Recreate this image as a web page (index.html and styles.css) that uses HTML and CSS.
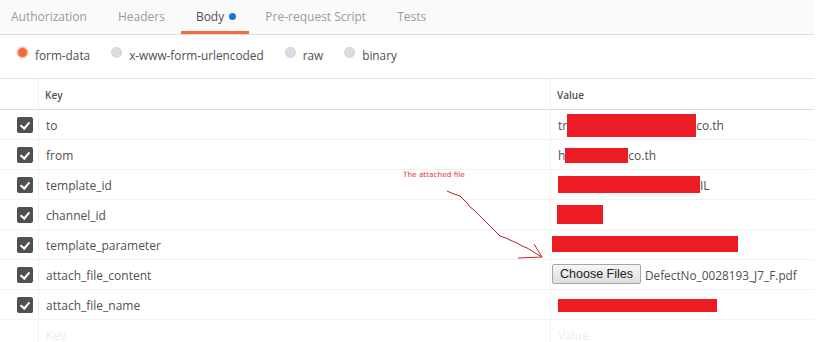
FILE: index.html
```html
<!DOCTYPE html>
<html>
<head>
<meta charset="utf-8">
<link rel="stylesheet" href="styles.css">
</head>
<body>
<div class="page">
  <div class="tabs">
    <div class="tab first">Authorization</div>
    <div class="tab">Headers</div>
    <div class="tab active">Body <span class="dot"></span></div>
    <div class="tab">Pre-request Script</div>
    <div class="tab">Tests</div>
  </div>
  <div class="modes">
    <label class="mode"><span class="radio on"></span>form-data</label>
    <label class="mode"><span class="radio"></span>x-www-form-urlencoded</label>
    <label class="mode"><span class="radio"></span>raw</label>
    <label class="mode"><span class="radio"></span>binary</label>
  </div>
  <div class="table">
    <div class="row head">
      <div class="cell chk"></div>
      <div class="cell key">Key</div>
      <div class="cell val">Value</div>
    </div>
    <div class="row">
      <div class="cell chk"><span class="box"></span></div>
      <div class="cell key">to</div>
      <div class="cell val">tr<span class="red r1"></span>co.th</div>
    </div>
    <div class="row">
      <div class="cell chk"><span class="box"></span></div>
      <div class="cell key">from</div>
      <div class="cell val">h<span class="red r2"></span>co.th</div>
    </div>
    <div class="row">
      <div class="cell chk"><span class="box"></span></div>
      <div class="cell key">template_id</div>
      <div class="cell val"><span class="red r3"></span>IL</div>
    </div>
    <div class="row">
      <div class="cell chk"><span class="box"></span></div>
      <div class="cell key">channel_id</div>
      <div class="cell val"><span class="red r4"></span></div>
    </div>
    <div class="row">
      <div class="cell chk"><span class="box"></span></div>
      <div class="cell key">template_parameter</div>
      <div class="cell val"><span class="red r5"></span></div>
    </div>
    <div class="row">
      <div class="cell chk"><span class="box"></span></div>
      <div class="cell key">attach_file_content</div>
      <div class="cell val file"><span class="choose">Choose Files</span><span class="fname">DefectNo_0028193_J7_F.pdf</span></div>
    </div>
    <div class="row">
      <div class="cell chk"><span class="box"></span></div>
      <div class="cell key">attach_file_name</div>
      <div class="cell val"><span class="red r6"></span></div>
    </div>
    <div class="row ph">
      <div class="cell chk"></div>
      <div class="cell key">Key</div>
      <div class="cell val">Value</div>
    </div>
    <div class="note">
      <span class="note-text">The attached file</span>
      <svg class="arrow" width="160" height="100" viewBox="0 0 160 100">
        <path d="M47 24 L54 27 L60 29 L63 32 L67 36 L70 40 L74 43 L77 46 L80 49 L84 53 L87 56 L92 61 L96 65 L100 69 L106 71 L112 74 L117 76 L122 79 L127 81 L132 84 L137 87 L142 90" fill="none" stroke="#b3262b" stroke-width="1"/>
        <path d="M118 91 L142 90 L134 77" fill="none" stroke="#c1272d" stroke-width="1"/>
      </svg>
    </div>
  </div>
</div>
</body>
</html>
```
FILE: styles.css
```css
* { box-sizing: border-box; }
body {
  margin: 0;
  background: #fff;
  font-family: "Open Sans", "Noto Sans", sans-serif;
  color: #505050;
}
.page { width: 814px; }
.tabs {
  display: flex;
  height: 35px;
  background: #fafafa;
  border-bottom: 1px solid #dcdcdc;
}
.tab {
  padding: 0 15px;
  height: 34px;
  line-height: 34px;
  font-size: 12px;
  color: #9a9a9a;
  margin-right: 1px;
}
.tab.first { margin-left: -4px; }
.tab.active {
  color: #505050;
  border-bottom: 3px solid #f26b3a;
  padding-right: 13px;
}
.dot {
  display: inline-block;
  width: 7px;
  height: 7px;
  border-radius: 50%;
  background: #1673e0;
  margin-left: 2px;
  vertical-align: 1px;
}
.modes {
  display: flex;
  align-items: center;
  height: 43px;
  padding-left: 17px;
  padding-bottom: 3px;
  gap: 21px;
  font-size: 11.8px;
  color: #505050;
}
.mode { display: flex; align-items: center; }
.radio {
  width: 11px;
  height: 11px;
  border-radius: 50%;
  background: #dcdcdc;
  border: 1px solid #d2d2d2;
  margin-right: 7px;
  margin-top: -5px;
}
.radio.on {
  background: #f26b3a;
  border: 1px solid #f6c8b2;
  box-shadow: 0 0 0 1px #fbe2d6;
}
.table {
  position: relative;
  border-top: 1px solid #e2e2e2;
}
.row {
  display: grid;
  grid-template-columns: 38px 512px 264px;
  height: 30px;
  border-bottom: 1px solid #f2f2f2;
  font-size: 12px;
}
.row.head {
  height: 31px;
  border-bottom: 1px solid #dcdcdc;
  font-size: 10px;
  font-weight: 600;
  color: #505050;
}
.cell {
  display: flex;
  align-items: center;
  overflow: hidden;
  white-space: nowrap;
  padding-top: 1px;
}
.key {
  border-left: 1px solid #f0f0f0;
  padding-left: 7px;
}
.val {
  border-left: 1px solid #f0f0f0;
  padding-left: 7px;
}
.row.head .key, .row.head .val { padding-left: 6px; }
.chk { justify-content: flex-start; padding-left: 17px; padding-top: 0; }
.box {
  position: relative;
  width: 16px;
  height: 16px;
  border-radius: 2px;
  background: #505050;
}
.box::after {
  content: "";
  position: absolute;
  left: 5px;
  top: 3px;
  width: 4px;
  height: 7px;
  border-right: 2px solid #fff;
  border-bottom: 2px solid #fff;
  transform: rotate(40deg);
}
.red { display: inline-block; background: #ed1c24; flex: none; }
.r1 { width: 129px; height: 23px; margin-top: 1px; }
.r2 { width: 63px; height: 15px; margin-top: 1px; }
.r3 { width: 142px; height: 17px; margin-top: -2px; }
.r4 { width: 46px; height: 19px; margin-top: -2px; margin-left: -1px; }
.r5 { width: 186px; height: 16px; margin-left: -6px; margin-top: -3px; }
.r6 { width: 159px; height: 13px; margin-top: 1px; }
.file { padding-left: 1px; }
.choose {
  font-family: "Liberation Sans", Arial, sans-serif;
  font-size: 12.5px;
  color: #222;
  height: 20px;
  line-height: 18px;
  padding: 0 7px;
  border: 1px solid #a6a6a6;
  border-radius: 2px;
  background: linear-gradient(#f6f6f6, #dedede);
  margin-top: -2px;
}
.fname { margin-left: 4px; color: #505050; font-size: 11.8px; }
.row.ph { color: #ececec; border-bottom: none; }
.note {
  position: absolute;
  left: 356px;
  top: 88px;
  width: 200px;
  height: 110px;
}
.note-text {
  position: absolute;
  left: 47px;
  top: 3px;
  font-family: "DejaVu Sans", sans-serif;
  font-size: 7.3px;
  color: #e2363c;
}
.arrow { position: absolute; left: 44px; top: 0; }
```
